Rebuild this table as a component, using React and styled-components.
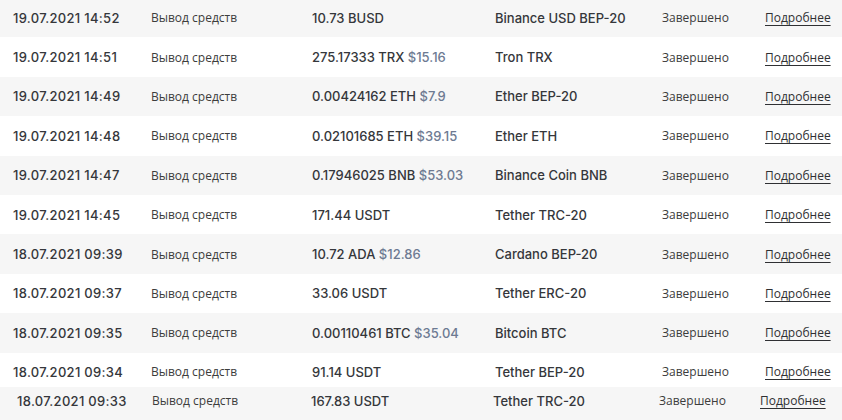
import React from 'react'
import styled, { createGlobalStyle, css } from 'styled-components'

const GlobalStyle = createGlobalStyle`
  html, body {
    margin: 0;
    padding: 0;
    background: #ffffff;
  }
  body {
    width: 842px;
    height: 420px;
    overflow: hidden;
  }
`

const rows = [
  { date: '19.07.2021 14:52', amount: '10.73 BUSD', usd: null, network: 'Binance USD BEP-20' },
  { date: '19.07.2021 14:51', amount: '275.17333 TRX', usd: '$15.16', network: 'Tron TRX' },
  { date: '19.07.2021 14:49', amount: '0.00424162 ETH', usd: '$7.9', network: 'Ether BEP-20' },
  { date: '19.07.2021 14:48', amount: '0.02101685 ETH', usd: '$39.15', network: 'Ether ETH' },
  { date: '19.07.2021 14:47', amount: '0.17946025 BNB', usd: '$53.03', network: 'Binance Coin BNB' },
  { date: '19.07.2021 14:45', amount: '171.44 USDT', usd: null, network: 'Tether TRC-20' },
  { date: '18.07.2021 09:39', amount: '10.72 ADA', usd: '$12.86', network: 'Cardano BEP-20' },
  { date: '18.07.2021 09:37', amount: '33.06 USDT', usd: null, network: 'Tether ERC-20' },
  { date: '18.07.2021 09:35', amount: '0.00110461 BTC', usd: '$35.04', network: 'Bitcoin BTC' },
  { date: '18.07.2021 09:34', amount: '91.14 USDT', usd: null, network: 'Tether BEP-20', cut: true },
  { date: '18.07.2021 09:33', amount: '167.83 USDT', usd: null, network: 'Tether TRC-20', shifted: true },
]

const List = styled.div`
  display: flex;
  flex-direction: column;
  margin-top: -2px;
`

const Row = styled.div`
  display: grid;
  grid-template-columns: 138px 161px 183px 167px 103px auto;
  align-items: center;
  box-sizing: border-box;
  height: 39.4px;
  padding-left: 13px;
  background: ${p => (p.$odd ? '#f6f6f6' : '#ffffff')};

  ${p =>
    p.$cut &&
    css`
      height: 34.6px;
      padding-top: 4px;
    `}

  ${p =>
    p.$shifted &&
    css`
      grid-template-columns: 135px 159px 182px 166px 101px auto;
      padding-left: 17px;
      height: 35px;
      padding-bottom: 8px;
      background: #f6f6f6;
    `}
`

const Strong = styled.span`
  font-family: Inter, 'Liberation Sans', sans-serif;
  font-weight: 500;
  font-size: 13px;
  color: #35373b;
  white-space: nowrap;
`

const DateText = styled(Strong)`
  letter-spacing: 0.3px;
`

const Light = styled.span`
  font-family: 'Open Sans', 'Liberation Sans', sans-serif;
  font-size: 12px;
  color: #3c3c3c;
  white-space: nowrap;
`

const Usd = styled.span`
  color: #6d7a92;
`

const More = styled.a`
  font-family: 'Open Sans', 'Liberation Sans', sans-serif;
  font-size: 12px;
  color: #2f3033;
  text-decoration: underline;
  text-underline-offset: 3px;
  white-space: nowrap;
  cursor: pointer;
`

export default function App() {
  return (
    <>
      <GlobalStyle />
      <List>
        {rows.map((r, i) => (
          <Row key={r.date} $odd={i % 2 === 0} $cut={r.cut} $shifted={r.shifted}>
            <DateText>{r.date}</DateText>
            <Light>Вывод средств</Light>
            <Strong>
              {r.amount}
              {r.usd && <Usd> {r.usd}</Usd>}
            </Strong>
            <Strong>{r.network}</Strong>
            <Light>Завершено</Light>
            <More>Подробнее</More>
          </Row>
        ))}
      </List>
    </>
  )
}
